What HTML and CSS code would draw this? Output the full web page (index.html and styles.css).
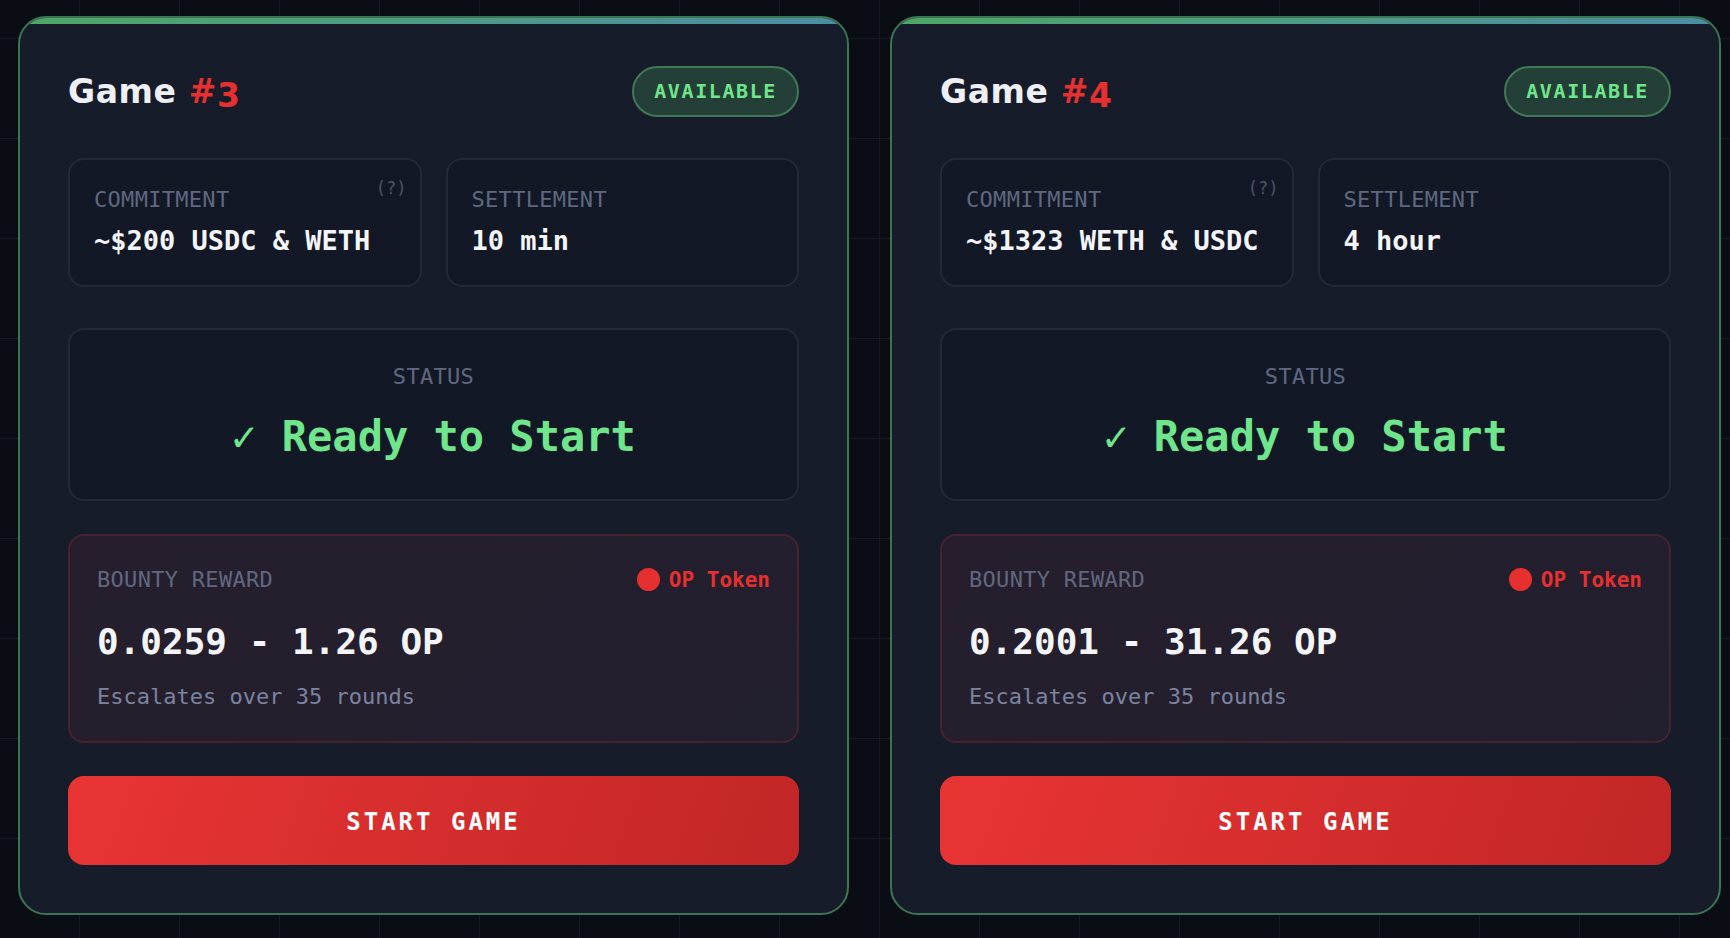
FILE: index.html
```html
<!DOCTYPE html>
<html lang="en">
  <head>
    <meta charset="UTF-8" />
    <meta name="viewport" content="width=device-width, initial-scale=1.0" />
    <title>Games</title>
    <link rel="stylesheet" href="styles.css">
  </head>
  <body>
    <div class="game-list">
      <div class="game-card">
        <div class="card-head">
          <h2 class="game-title">Game <span class="game-num">#<span class="digit">3</span></span></h2>
          <span class="badge">AVAILABLE</span>
        </div>
        <div class="stats">
          <div class="stat-box">
            <span class="help">(?)</span>
            <div class="label">COMMITMENT</div>
            <div class="value">~$200 USDC &amp; WETH</div>
          </div>
          <div class="stat-box">
            <div class="label">SETTLEMENT</div>
            <div class="value">10 min</div>
          </div>
        </div>
        <div class="status-box">
          <div class="label">STATUS</div>
          <div class="status-text"><span class="check">✓</span> Ready to Start</div>
        </div>
        <div class="bounty">
          <div class="bounty-head">
            <div class="label">BOUNTY REWARD</div>
            <div class="token"><span class="dot"></span>OP Token</div>
          </div>
          <div class="bounty-amount">0.0259 - 1.26 OP</div>
          <div class="bounty-note">Escalates over 35 rounds</div>
        </div>
        <button class="start-btn">START GAME</button>
      </div>

      <div class="game-card">
        <div class="card-head">
          <h2 class="game-title">Game <span class="game-num">#<span class="digit">4</span></span></h2>
          <span class="badge">AVAILABLE</span>
        </div>
        <div class="stats">
          <div class="stat-box">
            <span class="help">(?)</span>
            <div class="label">COMMITMENT</div>
            <div class="value">~$1323 WETH &amp; USDC</div>
          </div>
          <div class="stat-box">
            <div class="label">SETTLEMENT</div>
            <div class="value">4 hour</div>
          </div>
        </div>
        <div class="status-box">
          <div class="label">STATUS</div>
          <div class="status-text"><span class="check">✓</span> Ready to Start</div>
        </div>
        <div class="bounty">
          <div class="bounty-head">
            <div class="label">BOUNTY REWARD</div>
            <div class="token"><span class="dot"></span>OP Token</div>
          </div>
          <div class="bounty-amount">0.2001 - 31.26 OP</div>
          <div class="bounty-note">Escalates over 35 rounds</div>
        </div>
        <button class="start-btn">START GAME</button>
      </div>
    </div>
  </body>
</html>
```
FILE: styles.css
```css
* {
  margin: 0px;
  padding: 0px;
  box-sizing: border-box;
}
body {
  background-color: #0a0d14;
  background-image: linear-gradient(#141925 1px, transparent 1px),
    linear-gradient(90deg, #141925 1px, transparent 1px);
  background-size: 100px 100px;
  background-position: 79px 38px;
  font-family: "DejaVu Sans Mono", "Liberation Mono", monospace;
  color: #f1f3f7;
  height: 938px;
  overflow: hidden;
}
.game-list {
  display: grid;
  grid-template-columns: 831px 831px;
  gap: 41px;
  padding: 16px 0 0 18px;
}

.game-card {
  position: relative;
  overflow: hidden;
  background-color: #171c2b;
  border: 2px solid #3b7552;
  border-radius: 28px;
  padding: 48px;
}
.game-card::before {
  content: "";
  position: absolute;
  top: 0;
  left: 0;
  right: 0;
  height: 6px;
  background: linear-gradient(90deg, #4fa767, #4a8fa4);
}

.card-head {
  display: flex;
  justify-content: space-between;
  align-items: center;
}
.game-title {
  font-family: "DejaVu Sans", sans-serif;
  font-size: 33px;
  font-weight: 700;
  letter-spacing: 0.6px;
  color: #eef0f5;
}
.game-num {
  color: #e5302f;
}
.digit {
  position: relative;
  top: 4px;
}
.badge {
  display: inline-block;
  height: 51px;
  line-height: 47px;
  padding: 0 20px;
  border: 2px solid #3f7a55;
  border-radius: 26px;
  background-color: #243f37;
  color: #6fe68b;
  font-size: 20px;
  font-weight: 700;
  letter-spacing: 1.6px;
}

.label {
  font-size: 22px;
  line-height: 1.2;
  letter-spacing: 0.3px;
  color: #5f6880;
}

.stats {
  display: grid;
  grid-template-columns: 1fr 1fr;
  gap: 24px;
  margin-top: 41px;
}
.stat-box {
  position: relative;
  background-color: #131826;
  border: 2px solid #222939;
  border-radius: 16px;
  padding: 27px 24px;
}
.stat-box .label {
  margin-bottom: 12px;
}
.help {
  position: absolute;
  top: 18px;
  right: 13px;
  font-size: 17px;
  color: #4b5367;
}
.value {
  font-size: 27px;
  font-weight: 700;
  line-height: 1.2;
  color: #f3f5f9;
}

.status-box {
  margin-top: 41px;
  background-color: #131826;
  border: 2px solid #222939;
  border-radius: 16px;
  padding: 34px 24px 36px;
  text-align: center;
}
.status-text {
  margin-top: 22px;
  font-size: 42px;
  font-weight: 700;
  line-height: 1.2;
  color: #6fe68b;
}
.check {
  font-weight: 400;
  font-size: 42px;
}

.bounty {
  margin-top: 33px;
  background: linear-gradient(135deg, #261e2c, #221f2e);
  border: 2px solid #47222f;
  border-radius: 16px;
  padding: 31px 27px 30px 27px;
}
.bounty-head {
  display: flex;
  justify-content: space-between;
  align-items: center;
}
.token {
  display: flex;
  align-items: center;
  gap: 9px;
  font-size: 21px;
  font-weight: 700;
  color: #e5302f;
}
.dot {
  width: 23px;
  height: 23px;
  border-radius: 50%;
  background-color: #e5302f;
}
.bounty-amount {
  margin-top: 27px;
  font-size: 36px;
  font-weight: 700;
  line-height: 1.2;
  color: #f3f5f9;
}
.bounty-note {
  margin-top: 21px;
  font-size: 22px;
  line-height: 1.2;
  color: #7a84a0;
}

.start-btn {
  display: block;
  width: 100%;
  height: 89px;
  margin-top: 33px;
  padding-top: 3px;
  border: none;
  border-radius: 16px;
  background: linear-gradient(110deg, #e93434, #c22626);
  color: #ffffff;
  font-family: "DejaVu Sans Mono", "Liberation Mono", monospace;
  font-size: 24px;
  font-weight: 700;
  letter-spacing: 3px;
}
```
